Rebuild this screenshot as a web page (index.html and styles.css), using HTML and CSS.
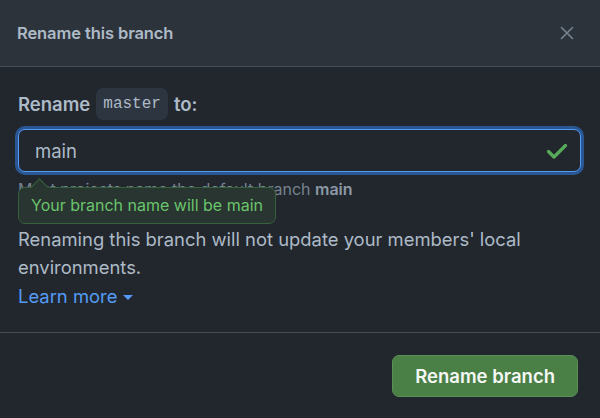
FILE: index.html
```html
<!DOCTYPE html>
<html lang="en">
<head>
<meta charset="utf-8">
<title>Rename this branch</title>
<link rel="stylesheet" href="styles.css">
</head>
<body>
<div class="dialog">
  <header class="dialog-header">
    <h2 class="dialog-title">Rename this branch</h2>
    <button class="close-btn" aria-label="Close">
      <svg width="14" height="14" viewBox="0 0 14 14"><path d="M1.5 1.5l11 11M12.5 1.5l-11 11" stroke="currentColor" stroke-width="1.6" stroke-linecap="round" fill="none"/></svg>
    </button>
  </header>
  <div class="dialog-body">
    <label class="field-label" for="branch">Rename <code class="branch-code">master</code> to:</label>
    <div class="input-wrap">
      <input id="branch" class="text-input" type="text" value="main">
      <svg class="check-icon" width="22" height="18" viewBox="0 0 22 18"><path d="M2.5 9.5l5.5 5.5L19.5 3.5" stroke="currentColor" stroke-width="3.2" stroke-linecap="round" stroke-linejoin="round" fill="none"/></svg>
    </div>
    <div class="hint-wrap">
      <p class="hint">Most projects name the default branch <strong>main</strong></p>
      <div class="tooltip">Your branch name will be main</div>
    </div>
    <p class="note">Renaming this branch will not update your members' local environments.</p>
    <a class="learn-more" href="#">Learn more <span class="caret"></span></a>
  </div>
  <footer class="dialog-footer">
    <button class="btn-primary">Rename branch</button>
  </footer>
</div>
</body>
</html>
```

FILE: styles.css
```css
* { box-sizing: border-box; }
html, body {
  margin: 0;
  padding: 0;
  background: #22272e;
}
body {
  font-family: Inter, "Noto Sans", "Liberation Sans", sans-serif;
  color: #adbac7;
  width: 600px;
  height: 418px;
  overflow: hidden;
}
.dialog {
  display: flex;
  flex-direction: column;
  height: 418px;
}
.dialog-header {
  height: 67px;
  background: #2d333b;
  border-bottom: 1px solid #444c56;
  display: flex;
  align-items: center;
  justify-content: space-between;
  padding: 0 26px 0 17px;
}
.dialog-title {
  margin: 0;
  font-size: 16.5px;
  font-weight: 600;
  color: #adbac7;
  letter-spacing: -0.1px;
}
.close-btn {
  background: none;
  border: 0;
  padding: 0;
  color: #768390;
  display: flex;
}
.dialog-body {
  padding: 21px 19px 0 18px;
  height: 266px;
  border-bottom: 1px solid #444c56;
}
.field-label {
  display: flex;
  align-items: center;
  gap: 6px;
  font-size: 18.5px;
  font-weight: 600;
  color: #adbac7;
  height: 32px;
}
.branch-code {
  font-family: "Liberation Mono", "DejaVu Sans Mono", monospace;
  font-weight: 400;
  font-size: 16px;
  background: #2d3540;
  color: #adbac7;
  border-radius: 7px;
  padding: 0 7px;
  height: 32px;
  line-height: 32px;
  display: inline-block;
}
.input-wrap {
  margin-top: 9px;
  position: relative;
  display: flex;
  align-items: center;
}
.text-input {
  width: 100%;
  height: 43px;
  background: #22272e;
  border: 1px solid #539bf5;
  border-radius: 7px;
  box-shadow: 0 0 0 3px #2a5694;
  color: #adbac7;
  font-family: inherit;
  font-size: 18.5px;
  padding: 0 16px;
  outline: none;
}
.check-icon {
  position: absolute;
  right: 13px;
  color: #57ab5a;
}
.hint-wrap {
  position: relative;
  height: 46px;
}
.hint {
  margin: 7px 0 0;
  font-size: 16px;
  color: #768390;
}
.hint strong { color: #8c98a5; font-weight: 600; }
.tooltip {
  position: absolute;
  left: 0;
  top: 8px;
  background: #283530;
  border: 1px solid #37603c;
  color: #6bc46d;
  border-radius: 7px;
  font-size: 16px;
  height: 37px;
  line-height: 35px;
  padding: 0 12px;
}
.tooltip::before {
  content: "";
  position: absolute;
  left: 14px;
  top: -7px;
  width: 12px;
  height: 12px;
  background: #283530;
  border-left: 1px solid #37603c;
  border-top: 1px solid #37603c;
  transform: rotate(45deg);
}
.note {
  margin: 0;
  font-size: 18.4px;
  line-height: 28px;
  color: #adbac7;
  max-width: 560px;
}
.learn-more {
  display: inline-flex;
  align-items: center;
  gap: 6px;
  color: #539bf5;
  text-decoration: none;
  font-size: 18.4px;
  line-height: 30px;
}
.caret {
  width: 0;
  height: 0;
  border-left: 5px solid transparent;
  border-right: 5px solid transparent;
  border-top: 5px solid #539bf5;
  margin-top: 2px;
}
.dialog-footer {
  flex: 1;
  display: flex;
  justify-content: flex-end;
  align-items: flex-start;
  padding: 22px 22px 0 0;
}
.btn-primary {
  background: #4a7f46;
  border: 1px solid #5c8f56;
  color: #f5f7f5;
  border-radius: 7px;
  font-family: inherit;
  font-size: 18.5px;
  font-weight: 600;
  height: 42px;
  padding: 0 22px;
}
```
